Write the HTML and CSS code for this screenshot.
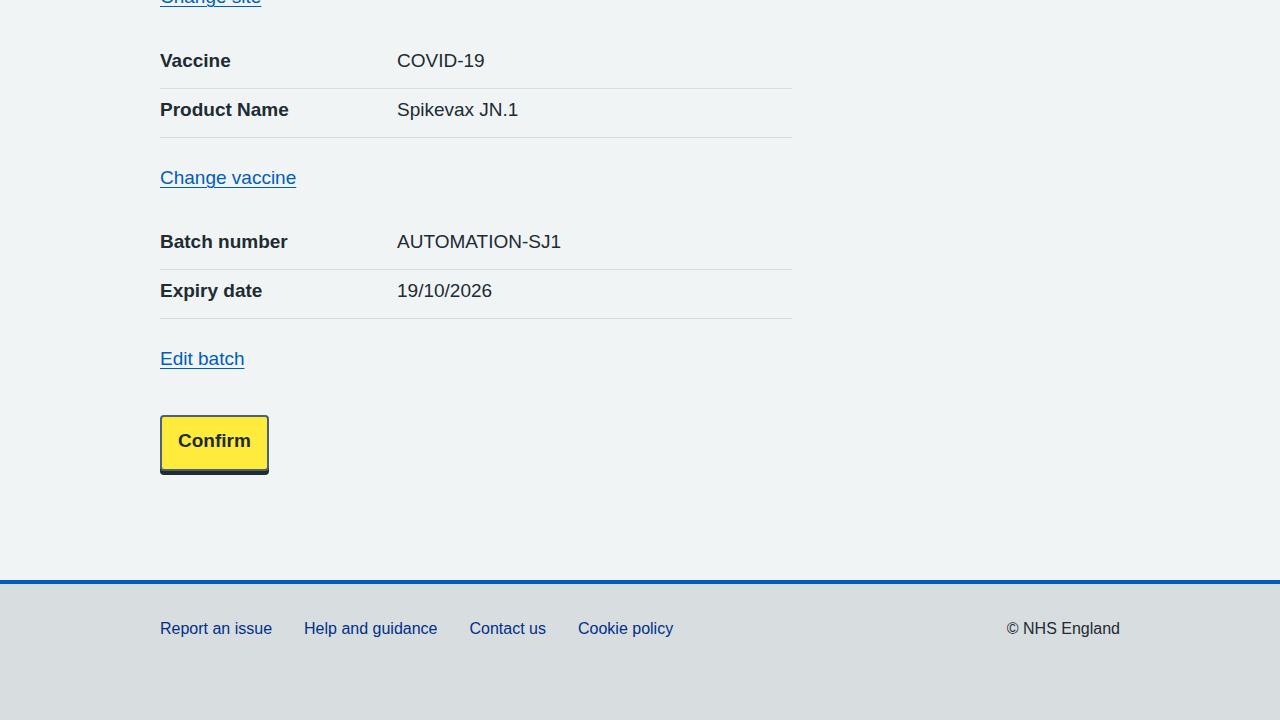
FILE: index.html
```html
<!DOCTYPE html>
<html lang="en">
<head>
<meta charset="utf-8">
<title>Check and confirm</title>
<link rel="stylesheet" href="styles.css">
</head>
<body>
<main class="main">
  <div class="container">
    <p class="para"><a class="link" href="#">Change site</a></p>

    <dl class="summary">
      <div class="summary-row">
        <dt class="summary-key">Vaccine</dt>
        <dd class="summary-value">COVID-19</dd>
      </div>
      <div class="summary-row">
        <dt class="summary-key">Product Name</dt>
        <dd class="summary-value">Spikevax JN.1</dd>
      </div>
    </dl>
    <p class="para"><a class="link" href="#">Change vaccine</a></p>

    <dl class="summary">
      <div class="summary-row">
        <dt class="summary-key">Batch number</dt>
        <dd class="summary-value">AUTOMATION-SJ1</dd>
      </div>
      <div class="summary-row">
        <dt class="summary-key">Expiry date</dt>
        <dd class="summary-value">19/10/2026</dd>
      </div>
    </dl>
    <p class="para"><a class="link" href="#">Edit batch</a></p>

    <button class="button" type="button">Confirm</button>
  </div>
</main>
<footer class="footer">
  <div class="footer-inner">
    <ul class="footer-list">
      <li><a class="footer-link" href="#">Report an issue</a></li>
      <li><a class="footer-link" href="#">Help and guidance</a></li>
      <li><a class="footer-link" href="#">Contact us</a></li>
      <li><a class="footer-link" href="#">Cookie policy</a></li>
    </ul>
    <p class="copyright">© NHS England</p>
  </div>
</footer>
</body>
</html>
```

FILE: styles.css
```css
html, body {
  margin: 0;
  padding: 0;
}
body {
  background: #f0f4f5;
  color: #212b32;
  font-family: "Liberation Sans", Arial, sans-serif;
  font-size: 19px;
  line-height: 28px;
}
.main {
  margin-top: -17px;
  padding-bottom: 109px;
}
.container {
  width: 960px;
  margin: 0 auto;
}
.para {
  margin: 0 0 29px 0;
}
.link {
  color: #005eb8;
  text-decoration: underline;
  text-underline-offset: 3px;
  text-decoration-thickness: 1px;
}
.summary {
  width: 632px;
  margin: 0 0 26px 0;
}
.summary-row {
  display: grid;
  grid-template-columns: 237px 1fr;
  border-bottom: 1px solid #d8dde0;
}
.summary-key,
.summary-value {
  margin: 0;
  padding: 7px 0 13px 0;
}
.summary-key {
  font-weight: 700;
}
.button {
  font-family: inherit;
  font-size: 19px;
  line-height: 28px;
  font-weight: 700;
  color: #212b32;
  background: #ffeb3b;
  border: 2px solid #4c6272;
  border-radius: 4px;
  box-shadow: 0 4px 0 #212b32;
  padding: 10px 16px 14px 16px;
  margin: 13px 0 0 0;
  cursor: pointer;
}
.footer {
  background: #d8dde0;
  border-top: 4px solid #005eb8;
  height: 136px;
}
.footer-inner {
  width: 960px;
  margin: 0 auto;
  display: flex;
  justify-content: space-between;
  align-items: flex-start;
  padding-top: 33px;
  font-size: 16px;
  line-height: 24px;
}
.footer-list {
  display: flex;
  gap: 32px;
  list-style: none;
  margin: 0;
  padding: 0;
}
.footer-link {
  color: #003087;
  text-decoration: none;
}
.copyright {
  margin: 0;
  color: #212b32;
}
```
